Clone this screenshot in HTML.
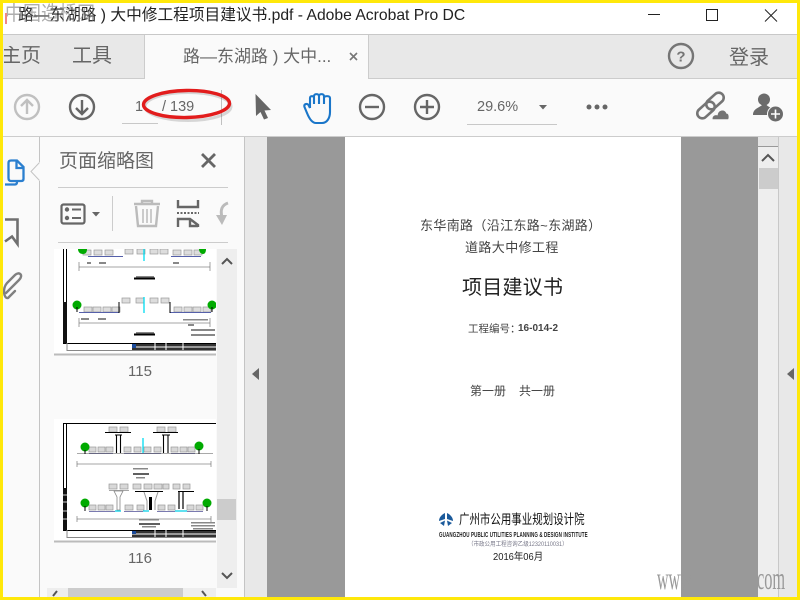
<!DOCTYPE html>
<html><head><meta charset="utf-8">
<style>
html,body{margin:0;padding:0;width:800px;height:600px;overflow:hidden;background:#fff}
body{position:relative;font-family:"Liberation Sans","Noto Sans CJK SC",sans-serif;color:#555}
.a{position:absolute}
.t{position:absolute;white-space:nowrap;line-height:1}
svg{position:absolute;overflow:visible}
</style></head><body>
<!-- backgrounds -->
<div class="a" style="left:0;top:34px;width:800px;height:1px;background:#c8c8c8"></div>
<div class="a" style="left:0;top:35px;width:800px;height:43px;background:#e8e8e8"></div>
<div class="a" style="left:144px;top:35px;width:225px;height:44px;background:#fafafa;border-left:1px solid #ccc;border-right:1px solid #ccc;box-sizing:border-box"></div>
<div class="a" style="left:0;top:78px;width:144px;height:1px;background:#ccc"></div>
<div class="a" style="left:369px;top:78px;width:431px;height:1px;background:#ccc"></div>
<div class="a" style="left:0;top:79px;width:800px;height:57px;background:#fafafa"></div>
<div class="a" style="left:0;top:136px;width:800px;height:1px;background:#ccc"></div>
<div class="a" style="left:0;top:137px;width:39px;height:463px;background:#fafafa"></div>
<div class="a" style="left:39px;top:137px;width:1px;height:463px;background:#c4c4c4"></div>
<div class="a" style="left:40px;top:137px;width:204px;height:463px;background:#fafafa"></div>
<div class="a" style="left:244px;top:137px;width:1px;height:463px;background:#c4c4c4"></div>
<div class="a" style="left:245px;top:137px;width:22px;height:463px;background:#e8e8e8"></div>
<div class="a" style="left:267px;top:137px;width:491px;height:463px;background:#999"></div>
<div class="a" style="left:345px;top:137px;width:336px;height:463px;background:#fff"></div>
<div class="a" style="left:758px;top:137px;width:20px;height:463px;background:#eee"></div>
<div class="a" style="left:778px;top:137px;width:1px;height:463px;background:#c8c8c8"></div>
<div class="a" style="left:779px;top:137px;width:21px;height:463px;background:#e8e8e8"></div>
<div class="a" style="left:758px;top:137px;width:20px;height:10px;background:#e4e4e4;border-bottom:1px solid #999;box-sizing:border-box"></div>
<div class="a" style="left:759px;top:168px;width:19px;height:21px;background:#ccc"></div>

<!-- title bar -->
<div class="t" style="left:18px;top:8px;font-size:15.7px;color:#222">路—东湖路 ) 大中修工程项目建议书.pdf - Adobe Acrobat Pro DC</div>
<div class="t" style="left:5px;top:3px;font-size:18px;color:rgba(120,120,120,.6);transform-origin:0 0;transform:scaleY(1.12)">中国造桥网</div>
<div class="a" style="left:5px;top:13px;width:2px;height:11px;background:#e88"></div>
<svg style="left:640px;top:5px" width="150" height="24" fill="none" stroke="#222" stroke-width="1">
<path d="M8 9.5H20"/><rect x="66.5" y="4.5" width="11" height="11"/><path d="M125 4.5L137 16.5M137 4.5L125 16.5"/>
</svg>

<!-- tabs -->
<div class="t" style="left:4px;top:46px;font-size:20px;color:#666"><span style="display:inline-block;width:37px;overflow:hidden;direction:rtl">主页</span></div>
<div class="t" style="left:72px;top:46px;font-size:20px;color:#666">工具</div>
<div class="t" style="left:183px;top:48px;font-size:17px;color:#666">路—东湖路 ) 大中...</div>
<svg style="left:349px;top:52px" width="10" height="10" stroke="#777" stroke-width="1.600"><path d="M1 1L8 8M8 1L1 8"/></svg>
<svg style="left:667px;top:42px" width="28" height="28" fill="none"><circle cx="14" cy="14" r="12" stroke="#757575" stroke-width="2.400"/><text x="14" y="19.500" font-size="15" font-weight="bold" fill="#757575" text-anchor="middle" font-family="Liberation Sans">?</text></svg>
<div class="t" style="left:729px;top:48px;font-size:20px;color:#666">登录</div>

<!-- toolbar -->
<svg style="left:0;top:79px" width="800" height="57" fill="none">
<g stroke="#c0c0c0" stroke-width="2.400"><circle cx="27" cy="28" r="12"/><path d="M27 35V21M21 27L27 21L33 27"/></g>
<g stroke="#666" stroke-width="2.400"><circle cx="82" cy="28" r="12"/><path d="M82 21V35M76 29L82 35L88 29"/></g>
<path d="M255.500 15L271 31L264.500 31.500L268 39L264 40.500L260.500 33L256 37Z" fill="#666"/>
<path d="M310 29V19C310 16.500 314 16.500 314 19V25M314 25V17C314 14.500 319 14.500 319 17V25M319 25V17C319 14.500 324 14.500 324 17V25M324 25V19C324 16.500 330 16.500 330 19V33C330 39 327 44 322 44H316C312 44 309 39 307 34L304.500 28C303.500 25 307 24 308.500 26L310 29" stroke="#1a76c9" stroke-width="2.100" stroke-linejoin="round"/>
<g stroke="#666" stroke-width="2.400"><circle cx="372" cy="28" r="12"/><path d="M365 28H379"/><circle cx="427" cy="28" r="12"/><path d="M420 28H434M427 21V35"/></g>
<path d="M539 26H547L543 30.500Z" fill="#666"/>
<g fill="#666"><circle cx="589" cy="28" r="2.500"/><circle cx="597" cy="28" r="2.500"/><circle cx="605" cy="28" r="2.500"/></g>
<g stroke="#757575" stroke-width="2.600"><rect x="696" y="26" width="20" height="10" rx="5" transform="rotate(-42 706 31)"/><rect x="705" y="17" width="20" height="10" rx="5" transform="rotate(-42 715 22)"/></g>
<path d="M712 41C711 37 714 35 717 35.500C718 30 725 29 727 34C730 34 730 41 728 41Z" fill="#757575" stroke="#fafafa" stroke-width="1.500"/>
<circle cx="764" cy="20.500" r="6" fill="#6b6b6b"/><path d="M763 25C760 29 753 29 753 36H768C769 33 771 31 772 29C769 28 767 27 766 25Z" fill="#6b6b6b"/>
<circle cx="775.500" cy="35" r="8" fill="#6b6b6b" stroke="#fafafa" stroke-width="1"/><path d="M771 35H780M775.500 30.500V39.500" stroke="#fff" stroke-width="1.600"/>
</svg>
<div class="t" style="left:135px;top:100px;font-size:14.500px;color:#666">1</div>
<div class="t" style="left:162px;top:100px;font-size:14.500px;color:#666">/ 139</div>
<div class="a" style="left:122px;top:123px;width:36px;height:1px;background:#c8c8c8"></div>
<div class="a" style="left:221px;top:90px;width:1px;height:35px;background:#c0c0c0"></div>
<div class="t" style="left:477px;top:100px;font-size:14.500px;color:#666">29.6%</div>
<div class="a" style="left:467px;top:124px;width:90px;height:1px;background:#c8c8c8"></div>
<!-- red ellipse -->
<svg style="left:130px;top:80px" width="110" height="50" fill="none">
<ellipse cx="58" cy="26.500" rx="43" ry="14" stroke="#555" stroke-width="3" opacity=".22"/>
<ellipse cx="56.500" cy="24" rx="43" ry="13.500" transform="rotate(-1 56 24)" stroke="#e21c1c" stroke-width="3.400"/>
</svg>

<!-- left nav icons -->
<svg style="left:0;top:150px" width="40" height="160" fill="none">
<path d="M8.500 26V13C8.500 11 9.500 10.500 11 10.500H17L23.500 17V29C23.500 30.500 22.500 31 21 31H11C9.500 31 8.500 30 8.500 28Z" stroke="#2b7fcf" stroke-width="2.300"/><path d="M16.500 11V18H23.500" stroke="#2b7fcf" stroke-width="2.300"/><path d="M5 34.500H15C16.500 34.500 17 33.500 17 32" stroke="#2b7fcf" stroke-width="2.300"/>
<path d="M5 69.500H17.500V94L12 86.500L5 91.500" stroke="#707070" stroke-width="2.600"/>
<path d="M5 143L18 130C23 125 18 121 14 125L6 133C1 139 3 149 7 148L14 141" stroke="#808080" stroke-width="2.400" stroke-linecap="round" transform="translate(1 0)"/>
</svg>
<svg style="left:30px;top:160px" width="11" height="26"><path d="M10 2L1 11.500L10 21" fill="#fafafa" stroke="#c4c4c4"/><path d="M10.500 2V21" stroke="#fafafa" stroke-width="2"/></svg>

<!-- panel -->
<div class="t" style="left:59px;top:152px;font-size:19px;color:#666">页面缩略图</div>
<svg style="left:200px;top:152px" width="18" height="18" stroke="#666" stroke-width="2.800"><path d="M2 2L15 15M15 2L2 15"/></svg>
<div class="a" style="left:58px;top:187px;width:170px;height:1px;background:#ccc"></div>
<div class="a" style="left:58px;top:242px;width:170px;height:1px;background:#ccc"></div>
<div class="a" style="left:112px;top:196px;width:1px;height:35px;background:#ccc"></div>
<svg style="left:55px;top:195px" width="175" height="40" fill="none">
<rect x="6.500" y="9.500" width="23" height="19" rx="2" stroke="#666" stroke-width="2.200"/>
<circle cx="12" cy="14.500" r="2.200" fill="#666"/><circle cx="12" cy="23" r="2.200" fill="#666"/>
<path d="M17 14.500H26M17 23H26" stroke="#666" stroke-width="2"/>
<path d="M37 17H45L41 21.500Z" fill="#666"/>
<g stroke="#bbb" stroke-width="2.400"><path d="M79 9H105M87 9V6H97V9"/><path d="M81 11L83 31H101L103 11"/><path d="M88 14V28M92 14V28M96 14V28" stroke-width="1.500"/></g>
<path d="M123 5V12H143V5M123 32V24H135L143 30V32M135 24V31H143" stroke="#666" stroke-width="2.400"/>
<path d="M122 18H144" stroke="#666" stroke-width="2" stroke-dasharray="2 1.500"/>
<path d="M173 8C167 10 165 15 167 22" stroke="#bbb" stroke-width="3"/><path d="M161 20L172 20L167 30Z" fill="#bbb"/>
</svg>

<!-- thumbnails clip -->
<div class="a" style="left:53px;top:249px;width:163px;height:339px;overflow:hidden">
<svg style="left:0;top:0" width="164" height="339" fill="none">
<defs></defs>
<!-- page 115 -->
<rect x="1" y="-60" width="162" height="165" fill="#fff"/>
<path d="M1 105.500H163" stroke="#bbb" stroke-width="2"/>
<path d="M10.500 0V94.500H163M13.500 0V54" stroke="#000" stroke-width="1"/>
<path d="M14 94V101.500H163" stroke="#888" stroke-width="1"/>
<rect x="10" y="53" width="4" height="41" fill="#111"/>
<g fill="#ddd" stroke="#999" stroke-width=".7">
<rect x="30" y="1" width="8" height="5"/><rect x="41" y="1" width="8" height="5"/><rect x="52" y="1" width="8" height="5"/><rect x="72" y="0" width="8" height="5"/><rect x="84" y="0" width="8" height="5"/><rect x="97" y="0" width="8" height="5"/><rect x="107" y="0" width="8" height="5"/><rect x="120" y="1" width="8" height="5"/><rect x="131" y="1" width="8" height="5"/><rect x="141" y="1" width="8" height="5"/>
<rect x="69" y="49" width="8" height="5"/><rect x="83" y="49" width="8" height="5"/><rect x="97" y="49" width="8" height="5"/><rect x="108" y="49" width="8" height="5"/>
<rect x="31" y="58" width="8" height="5"/><rect x="40" y="58" width="8" height="5"/><rect x="50" y="58" width="8" height="5"/><rect x="59" y="58" width="8" height="5"/><rect x="121" y="58" width="8" height="5"/><rect x="131" y="58" width="8" height="5"/><rect x="140" y="58" width="8" height="5"/><rect x="150" y="58" width="8" height="5"/>
</g>
<path d="M35 7.500H70M118 7.500H148M26 63.500H66M117 63.500H158" stroke="#5560aa" stroke-width="1"/>
<path d="M91 0V12M91 48V64" stroke="#00dcf0" stroke-width="1.300"/>
<path d="M66 64V53M117 64V53" stroke="#000" stroke-width="1"/>
<path d="M26 18H157M26 74H157" stroke="#888" stroke-width=".7"/>
<path d="M26 13V22M157 13V22M26 69V78M157 69V78" stroke="#666" stroke-width=".6"/>
<path d="M81 29.500H102M81 85.500H102" stroke="#000" stroke-width="2"/>
<g fill="#888"><rect x="34" y="13" width="4" height="2"/><rect x="46" y="13" width="7" height="2"/><rect x="83" y="27" width="18" height="1.500"/><rect x="83" y="83" width="18" height="1.500"/><rect x="120" y="13" width="6" height="2"/><rect x="28" y="69" width="8" height="2"/><rect x="45" y="69" width="8" height="2"/><rect x="130" y="70" width="25" height="1.500"/><rect x="138" y="80" width="24" height="2"/><rect x="138" y="85" width="24" height="2"/><rect x="135" y="75" width="6" height="2"/></g>
<path d="M25 0C25 3 27 5 30 5C33 5 34 3 34 0ZM146 0C146 3 148 5 150 5C152 5 153 3 153 0Z" fill="#0a0"/>
<circle cx="24" cy="56" r="4.500" fill="#0a0"/><circle cx="159" cy="56" r="4.500" fill="#0a0"/>
<path d="M24 58V63" stroke="#000"/><path d="M159 58V63" stroke="#000"/>
<g fill="#333"><rect x="79" y="95" width="84" height="2.500"/><rect x="79" y="98.500" width="84" height="2.500"/></g>
<rect x="79" y="95" width="4" height="4" fill="#1a4a9a"/>
<path d="M102 94V101M113 94V101M130 94V101" stroke="#fff"/>
<!-- page 116 -->
<rect x="1" y="170" width="162" height="122" fill="#fff"/>
<path d="M1 292.500H163" stroke="#bbb" stroke-width="2"/>
<path d="M163 174.500H10.500V281.500H163" stroke="#000" stroke-width="1"/>
<path d="M13.500 175V240" stroke="#000" stroke-width="1"/>
<path d="M14 281V288.500H163" stroke="#888" stroke-width="1"/>
<rect x="10" y="239" width="4" height="42" fill="#111"/>
<path d="M10 246H14M10 253H14M10 262H14M10 270H14" stroke="#ccc"/>
<g fill="#d8d8d8" stroke="#999" stroke-width=".7">
<rect x="56" y="178" width="8" height="5"/><rect x="67" y="178" width="8" height="5"/><rect x="104" y="178" width="8" height="5"/><rect x="115" y="178" width="8" height="5"/>
<rect x="36" y="198" width="7" height="5"/><rect x="45" y="198" width="7" height="5"/><rect x="53" y="198" width="7" height="5"/><rect x="71" y="198" width="7" height="5"/><rect x="81" y="198" width="7" height="5"/><rect x="91" y="198" width="7" height="5"/><rect x="101" y="198" width="7" height="5"/><rect x="118" y="198" width="7" height="5"/><rect x="127" y="198" width="7" height="5"/><rect x="135" y="198" width="7" height="5"/>
<rect x="56" y="235" width="8" height="5"/><rect x="67" y="235" width="8" height="5"/><rect x="80" y="235" width="8" height="5"/><rect x="91" y="235" width="8" height="5"/><rect x="101" y="235" width="8" height="5"/><rect x="110" y="235" width="6" height="5"/><rect x="120" y="235" width="7" height="5"/><rect x="130" y="235" width="7" height="5"/>
<rect x="36" y="256" width="7" height="5"/><rect x="45" y="256" width="7" height="5"/><rect x="53" y="256" width="7" height="5"/><rect x="72" y="256" width="8" height="5"/><rect x="84" y="256" width="7" height="5"/><rect x="105" y="256" width="7" height="5"/><rect x="115" y="256" width="7" height="5"/><rect x="134" y="256" width="7" height="5"/><rect x="143" y="256" width="7" height="5"/>
</g>
<path d="M52 183.500H78M100 183.500H125" stroke="#000"/>
<path d="M62 186H69M63.500 186V204M67.500 186V204M109 186H117M110.500 186V204M115 186V204" stroke="#000" stroke-width="1.100"/>
<path d="M36 204.500H60M71 204.500H108M118 204.500H142" stroke="#7a7ab0"/>
<path d="M24 204.500H160" stroke="#555" stroke-width=".6"/>
<path d="M90 189V204" stroke="#00dcf0" stroke-width="1.300"/>
<path d="M56 241.500H76M61 242H70L67 248V261H64V248Z" stroke="#888" stroke-width=".8"/>
<path d="M82 242.500H110M125 242.500H141" stroke="#000" stroke-width="1.100"/>
<path d="M91 243L94 252V261M105 243L102 252V261" stroke="#999" stroke-width="1"/>
<path d="M126 243V260M130 243V260" stroke="#000" stroke-width="1.200"/>
<rect x="96" y="248" width="3" height="13" fill="#000"/>
<path d="M36 262.500H62M71 262.500H90M104 262.500H122M134 262.500H150" stroke="#7a7ab0"/>
<path d="M62 262H68M90 262H96M122 262H134" stroke="#00cfe8" stroke-width="1.200"/>
<path d="M24 215H158M24 270H158" stroke="#888" stroke-width=".7"/>
<path d="M24 212V218M158 212V218M24 267V273M158 267V273" stroke="#666" stroke-width=".6"/>
<path d="M80 225H96M86 275H107" stroke="#000" stroke-width="1.200"/>
<g fill="#888"><rect x="80" y="219" width="15" height="1.500"/><rect x="86" y="270" width="20" height="1.500"/><rect x="89" y="277" width="14" height="1.500"/><rect x="138" y="273" width="24" height="1.500"/><rect x="138" y="276" width="24" height="1.500"/><rect x="140" y="279" width="20" height="1.500"/><rect x="83" y="228" width="9" height="1.500"/></g>
<circle cx="32" cy="198" r="4.500" fill="#0a0"/><circle cx="146" cy="197" r="4.500" fill="#0a0"/><circle cx="32" cy="254" r="4.500" fill="#0a0"/><circle cx="154" cy="254" r="4.500" fill="#0a0"/>
<path d="M32 201V205M146 200V205M32 257V262M154 257V262" stroke="#000"/>
<g fill="#333"><rect x="79" y="282" width="84" height="2.500"/><rect x="79" y="285.500" width="84" height="2.500"/></g>
<rect x="79" y="282" width="4" height="3" fill="#1a4a9a"/>
<path d="M102 281V288M113 281V288M130 281V288" stroke="#fff"/>
</svg>
</div>
<div class="a" style="left:217px;top:249px;width:20px;height:339px;background:#eee"></div>
<div class="a" style="left:217px;top:499px;width:19px;height:21px;background:#ccc"></div>
<svg style="left:220px;top:254px" width="14" height="330" fill="none" stroke="#555" stroke-width="2"><path d="M2 10L7 5L12 10M2 319L7 324L12 319"/></svg>
<div class="a" style="left:47px;top:588px;width:169px;height:9px;background:#eee"></div>
<div class="a" style="left:68px;top:588px;width:115px;height:9px;background:#ccc"></div>
<svg style="left:50px;top:590px" width="160" height="8" fill="none" stroke="#555" stroke-width="2"><path d="M7 1L3 6M152 1L156 6"/></svg>
<div class="t" style="left:128px;top:364px;font-size:15px;color:#666">115</div>
<div class="t" style="left:128px;top:551px;font-size:15px;color:#666">116</div>
<!-- collapse arrows -->
<svg style="left:250px;top:367px" width="12" height="14"><path d="M9 1V13L2 7Z" fill="#666"/></svg>
<svg style="left:785px;top:367px" width="12" height="14"><path d="M9 1V13L2 7Z" fill="#666"/></svg>
<svg style="left:760px;top:152px" width="16" height="12" fill="none" stroke="#555" stroke-width="2"><path d="M2 9L8 3L14 9"/></svg>

<!-- document -->
<div class="t" style="left:420px;top:219px;font-size:13px;color:#444;letter-spacing:.35px">东华南路（沿江东路~东湖路）</div>
<div class="t" style="left:465px;top:241px;font-size:13px;color:#444;letter-spacing:.4px">道路大中修工程</div>
<div class="t" style="left:462px;top:278px;font-size:20px;color:#222;letter-spacing:.25px">项目建议书</div>
<div class="t" style="left:468px;top:324px;font-size:10.500px;color:#444">工程编号：</div>
<div class="t" style="left:518px;top:324px;font-size:10px;color:#444;font-weight:bold">16-014-2</div>
<div class="t" style="left:470px;top:385px;font-size:12px;color:#444">第一册</div>
<div class="t" style="left:519px;top:385px;font-size:12px;color:#444">共一册</div>
<svg style="left:438px;top:512px" width="16" height="16"><path d="M7 1C3 3 1 6 1 9L7 7ZM9 1C13 3 15 6 15 9L9 7Z" fill="#1b5a9b"/><path d="M2 11L7 8.500L6 14ZM14 11L9 8.500L10 14Z" fill="#1b5a9b"/></svg>
<div class="t" style="left:459px;top:513px;font-size:13.500px;color:#111;transform-origin:0 0;transform:scaleX(.775)">广州市公用事业规划设计院</div>
<div class="t" style="left:439px;top:531px;font-size:7.500px;color:#222;transform-origin:0 0;transform:scaleX(.6);letter-spacing:.2px;font-weight:bold;white-space:pre">GUANGZHOU PUBLIC UTILITIES PLANNING &amp; DESIGN INSTITUTE</div>
<div class="t" style="left:468px;top:542px;font-size:6px;color:#778;transform-origin:0 0;transform:scaleX(.92)">（市政公用工程咨询乙级12320110031）</div>
<div class="t" style="left:493px;top:553px;font-size:10px;color:#222;transform-origin:0 0;transform:scaleX(.94)">2016年06月</div>
<!-- watermark -->
<div class="t" style="left:657px;top:562px;font-size:32px;color:#999;font-family:'Liberation Serif',serif;transform-origin:0 0;transform:scaleX(.5)">www</div>
<div class="t" style="left:757px;top:562px;font-size:32px;color:#999;font-family:'Liberation Serif',serif;transform-origin:0 0;transform:scaleX(.51)">com</div>

<!-- yellow frame -->
<div class="a" style="left:0;top:0;width:800px;height:3px;background:#ffe80a"></div>
<div class="a" style="left:0;top:597px;width:800px;height:3px;background:#ffe80a"></div>
<div class="a" style="left:0;top:0;width:3px;height:600px;background:#ffe80a"></div>
<div class="a" style="left:797px;top:0;width:3px;height:600px;background:#ffe80a"></div>
</body></html>
